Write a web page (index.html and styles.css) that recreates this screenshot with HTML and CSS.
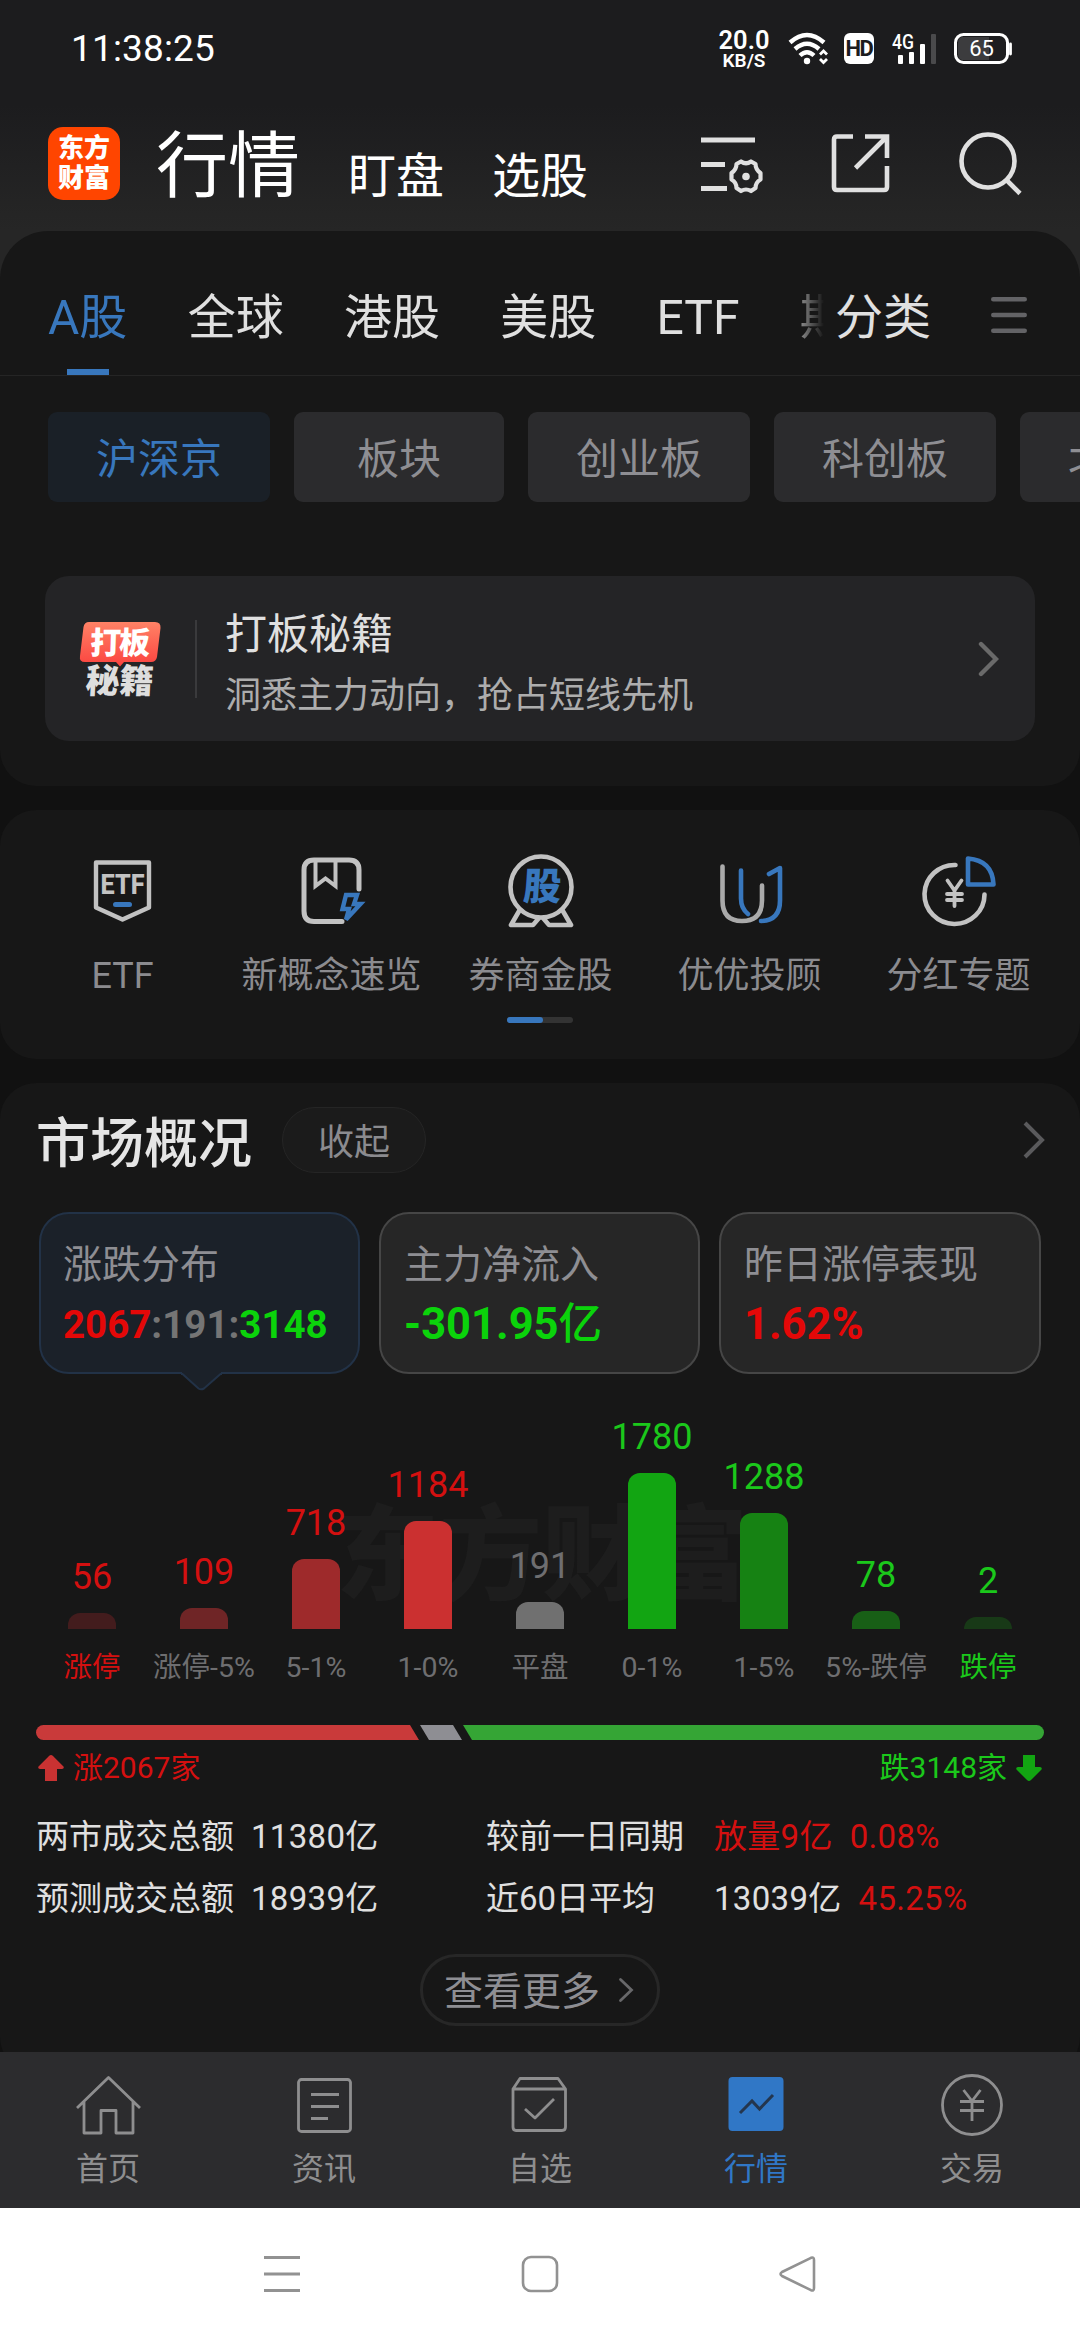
FILE: index.html
```html
<!DOCTYPE html>
<html lang="zh-CN">
<head>
<meta charset="utf-8">
<title>行情</title>
<link rel="stylesheet" href="styles.css">
</head>
<body>
<div class="screen">
  <header class="top">
    <div class="status">
      <span class="clock">11:38:25</span>
      <div class="status-icons">
        <div class="speed"><b>20.0</b><i>KB/S</i></div>
        <svg class="wifi" width="42" height="34" viewBox="0 0 42 34" fill="none" stroke="#fff" stroke-width="4.4">
          <path d="M2 10.5Q19 -4.500 36 10.500"/><path d="M7 17Q19 6.500 31 17"/><path d="M12 23.500Q19 17 26 23.500" />
          <circle cx="19" cy="29" r="3.200" fill="#fff" stroke="none"/>
          <path d="M32 22.500L35.500 19L39 22.500M32 27L35.500 30.500L39 27" stroke-width="2.800"/>
        </svg>
        <span class="hd">HD</span>
        <svg class="signal" width="46" height="34" viewBox="0 0 46 34">
          <text x="0" y="15.500" class="g4" textLength="22" lengthAdjust="spacingAndGlyphs">4G</text>
          <rect x="6" y="22" width="5" height="9" rx="1" fill="#fff"/><rect x="17" y="19" width="5" height="12" rx="1" fill="#fff"/>
          <rect x="28" y="11" width="5" height="20" rx="1" fill="#fff"/><rect x="39" y="1" width="5" height="30" rx="1" fill="#4a4a4c"/>
        </svg>
        <svg class="battery" width="60" height="32" viewBox="0 0 60 32">
          <rect x="1.500" y="1.500" width="52" height="28" rx="8" fill="#1d1d1f" stroke="#fff" stroke-width="3"/>
          <path d="M8 4H35V27H8Q4 26 4 21V10Q4 5 8 4Z" fill="#3c3c3e"/>
          <path d="M56.500 11V21" stroke="#fff" stroke-width="2.800" stroke-linecap="round"/>
          <text x="27.500" y="23" text-anchor="middle" class="pct">65</text>
        </svg>
      </div>
    </div>
    <div class="titlebar">
      <div class="logo"><span>东方</span><span>财富</span></div>
      <h1>行情</h1>
      <span class="sub">盯盘</span>
      <span class="sub">选股</span>
      <div class="actions">
        <svg width="64" height="62" viewBox="0 0 64 62" fill="none" stroke="#e0e0e0" stroke-width="5">
          <path d="M0 8H54M0 32.500H24M0 56.500H26"/>
          <path stroke-width="4.200" stroke-linejoin="round" d="M40 29.500Q45 33 50 29.500L54.500 32Q54.500 37.500 59.500 41L59.500 47.500Q54.500 50.500 54.500 56L50 59Q45 56 40 59L35.500 56Q35.500 50.500 30.500 47.500L30.500 41Q35.500 37.500 35.500 32Z"/>
          <circle cx="45" cy="44.500" r="3.800" fill="#e0e0e0" stroke="none"/>
        </svg>
        <svg width="60" height="62" viewBox="0 0 60 62" fill="none" stroke="#e0e0e0" stroke-width="4.600">
          <path d="M22 4.500H6Q3 4.500 3 7.500V55Q3 58 6 58H53Q56 58 56 55V34M34 4.500H56V26M56 4.500L24.500 36"/>
        </svg>
        <svg width="64" height="66" viewBox="0 0 64 66" fill="none" stroke="#e0e0e0" stroke-width="4.600">
          <circle cx="29" cy="31" r="26.500"/><path d="M47.500 50L61 63.500"/>
        </svg>
      </div>
    </div>
  </header>

  <main class="content">
    <section class="panel market">
      <nav class="tabs">
        <div class="tablist"><span class="on">A股</span><span>全球</span><span>港股</span><span>美股</span><span>ETF</span><span class="fade">期</span></div>
        <span class="classify">分类</span>
        <svg width="36" height="38" viewBox="0 0 36 38" stroke="#636366" stroke-width="4.600" stroke-linecap="round"><path d="M2.300 3.300H33.700M2.300 19H33.700M2.300 34.700H33.700"/></svg>
      </nav>
      <div class="chips">
        <span class="chip on">沪深京</span><span class="chip">板块</span><span class="chip">创业板</span><span class="chip">科创板</span><span class="chip">北交所</span>
      </div>
      <a class="banner">
        <svg class="badge" width="84" height="80" viewBox="0 0 84 80">
          <defs><linearGradient id="coral" x1="0" y1="0" x2="0" y2="1"><stop offset="0" stop-color="#ff8266"/><stop offset="1" stop-color="#fb433f"/></linearGradient></defs>
          <path d="M10 3H76Q82 3 81.500 9L78 38Q77 43 72 43H45L41 47.500L37 43H6Q0 43 1 37L4.500 8Q5.500 3 10 3Z" fill="url(#coral)"/>
          <text x="10" y="35" class="badge-top" textLength="60" transform="skewX(-2) translate(2 0)">打板</text>
          <text x="8" y="74" class="badge-bottom" textLength="68" transform="skewX(-3) translate(2 0)">秘籍</text>
        </svg>
        <div class="banner-text"><strong>打板秘籍</strong><p>洞悉主力动向，抢占短线先机</p></div>
        <svg width="22" height="38" viewBox="0 0 22 38" fill="none" stroke="#6a6a6a" stroke-width="4.400" stroke-linecap="round"><path d="M4 4L19 19L4 34"/></svg>
      </a>
    </section>

    <section class="panel tools">
      <div class="tool-row">
        <div class="tool">
          <svg width="80" height="84" viewBox="0 0 80 84" fill="none" stroke="#c2c2c2" stroke-width="4.400" stroke-linejoin="round">
            <path d="M13 12.500H66V57.500L39.500 69.500L13 57.500Z"/>
            <text x="39.500" y="43.500" text-anchor="middle" class="etf" textLength="44" lengthAdjust="spacingAndGlyphs">ETF</text>
            <path d="M32.500 54.500H46.500" stroke="#3877bd" stroke-width="5" stroke-linecap="round"/>
          </svg><span>ETF</span></div>
        <div class="tool">
          <svg width="80" height="84" viewBox="0 0 80 84" fill="none" stroke="#c2c2c2" stroke-width="5" stroke-linecap="round">
            <path d="M50 71.500H22Q12 71.500 12 61V20Q12 10 22 10H57Q67 10 67 20V39"/>
            <path d="M23.500 11V36L33.500 28.500L43.500 36V11" stroke-width="4"/>
            <path d="M54 45H65L62 54H68.500L54 69.500L57 59H50.500Z" stroke="#3877bd" stroke-width="4.400"/>
          </svg><span>新概念速览</span></div>
        <div class="tool">
          <svg width="80" height="84" viewBox="0 0 80 84" fill="none" stroke="#c2c2c2" stroke-width="4.600" stroke-linejoin="round">
            <circle cx="40" cy="37" r="30.500"/>
            <path d="M19 59.500L10 75H32L38 68M61 59.500L70 75H48L42 68"/>
            <text x="41" y="50" text-anchor="middle" class="gu" transform="skewX(-4) translate(3 0)">股</text>
          </svg><span>券商金股</span></div>
        <div class="tool">
          <svg width="80" height="84" viewBox="0 0 80 84" fill="none" stroke="#aaa" stroke-width="4.600" stroke-linecap="round" stroke-linejoin="round">
            <path d="M12.500 16.500V50.500Q12.500 71 32 71Q52 71 52 50.500V35.500"/>
            <path d="M31 20.500V48.500Q31 58.500 38 64M51 71Q70 70.500 70 50.500V18L59 24" stroke="#3877bd"/>
          </svg><span>优优投顾</span></div>
        <div class="tool">
          <svg width="80" height="84" viewBox="0 0 80 84" fill="none" stroke="#c2c2c2" stroke-width="4.600" stroke-linecap="round">
            <path d="M36.500 15A30 29.500 0 1 0 65.500 44.500"/>
            <path d="M28.500 30.500L35.500 40.500L42.500 30.500M35.500 40.500V56M28 44H43M28 50H43" stroke-width="3.800"/>
            <path d="M49 8.500V34.500H74.500Q73.500 10.500 49 8.500Z" stroke="#3877bd" stroke-linejoin="round"/>
          </svg><span>分红专题</span></div>
      </div>
      <div class="pager"><i></i></div>
    </section>

    <section class="panel overview">
      <div class="head"><h2>市场概况</h2><span class="pill">收起</span>
        <svg width="24" height="40" viewBox="0 0 24 40" fill="none" stroke="#5a5a5c" stroke-width="4"><path d="M3 3L20 20L3 37"/></svg>
      </div>
      <div class="cards">
        <div class="card on"><span>涨跌分布</span><b class="ratio"><em class="up">2067</em>:191:<em class="down">3148</em></b>
          <svg class="pointer" width="42" height="19" viewBox="0 0 42 19"><path d="M1 0V2L17.500 16.500Q20 18 23 16.500L40 2V0Z" fill="#1b2129"/><path d="M0 2H1.500L17.500 16.500Q20 18 23 16.500L39.500 2H41" fill="none" stroke="#223247" stroke-width="2"/></svg>
        </div>
        <div class="card"><span>主力净流入</span><b class="down">-301.95<small>亿</small></b></div>
        <div class="card"><span>昨日涨停表现</span><b class="up">1.62%</b></div>
      </div>
      <div class="chart">
        <span class="watermark">东方财富</span>
        <div class="col up"><b>56</b><i class="r1" style="height:16px"></i><span>涨停</span></div>
        <div class="col up"><b>109</b><i class="r2" style="height:21px"></i><span class="dim">涨停-5%</span></div>
        <div class="col up"><b>718</b><i class="r3" style="height:70px"></i><span class="dim">5-1%</span></div>
        <div class="col up"><b>1184</b><i class="r4" style="height:108px"></i><span class="dim">1-0%</span></div>
        <div class="col dim"><b>191</b><i class="flat" style="height:27px"></i><span>平盘</span></div>
        <div class="col down"><b>1780</b><i class="g4bar" style="height:156px"></i><span class="dim">0-1%</span></div>
        <div class="col down"><b>1288</b><i class="g3bar" style="height:116px"></i><span class="dim">1-5%</span></div>
        <div class="col down"><b>78</b><i class="g2bar" style="height:18px"></i><span class="dim">5%-跌停</span></div>
        <div class="col down"><b>2</b><i class="g1bar" style="height:12px"></i><span>跌停</span></div>
      </div>
      <svg class="split" width="1008" height="15" viewBox="0 0 1008 15">
        <path d="M7.500 0H374L383 15H7.500A7.500 7.500 0 0 1 7.500 0Z" fill="#c93a3a"/>
        <path d="M384 0H417L426 15H393Z" fill="#8e8e93"/>
        <path d="M427 0H1000.500A7.500 7.500 0 0 1 1000.500 15H436Z" fill="#35a535"/>
      </svg>
      <div class="counts">
        <span class="up"><svg width="28" height="28" viewBox="0 0 28 28"><path d="M14 1Q15 1 16 2L26.500 12.500Q27.500 14.500 25 15H20V27H8V15H3Q.500 14.500 1.500 12.500L12 2Q13 1 14 1Z" fill="#c93232"/></svg>涨2067家</span>
        <span class="down">跌3148家<svg width="28" height="28" viewBox="0 0 28 28"><path d="M14 27Q15 27 16 26L26.500 15.500Q27.500 13.500 25 13H20V1H8V13H3Q.500 13.500 1.500 15.500L12 26Q13 27 14 27Z" fill="#12a512"/></svg></span>
      </div>
      <div class="stats">
        <span>两市成交总额</span><span class="num">11380亿</span><span>较前一日同期</span><span class="pair num up"><i>放量9亿</i><i>0.08%</i></span>
        <span>预测成交总额</span><span class="num">18939亿</span><span>近60日平均</span><span class="pair num"><i>13039亿</i><i class="up">45.25%</i></span>
      </div>
      <div class="more"><span>查看更多</span><svg width="16" height="26" viewBox="0 0 16 26" fill="none" stroke="#68686a" stroke-width="2.800" stroke-linecap="round"><path d="M2.500 2.500L13.500 13L2.500 23.500"/></svg></div>
    </section>
  </main>

  <nav class="tabbar">
    <div><svg width="66" height="64" viewBox="0 0 66 64" fill="none" stroke="#8e8e8f" stroke-width="2.800" stroke-linejoin="round"><path d="M2 35L33.500 4.500L65 35M9 28V60H26V37.500H41V60H58V28"/></svg><span>首页</span></div>
    <div><svg width="66" height="64" viewBox="0 0 66 64" fill="none" stroke="#8e8e8f" stroke-width="2.800"><rect x="7.500" y="6.500" width="52" height="52" rx="3"/><path d="M20 21.500H48M20 33.500H48M20 45.500H37"/></svg><span>资讯</span></div>
    <div><svg width="66" height="64" viewBox="0 0 66 64" fill="none" stroke="#8e8e8f" stroke-width="2.800" stroke-linejoin="round"><path d="M6 16L13 5.500H51L58.500 16V54Q58.500 57.500 55 57.500H9Q6 57.500 6 54ZM6 16H58.500M18 36L28 45L47 26"/></svg><span>自选</span></div>
    <div class="on"><svg width="66" height="64" viewBox="0 0 66 64"><rect x="5.500" y="4" width="55" height="54" rx="4" fill="#3077c6"/><path d="M17 40L29 28L36.500 36L50 22" fill="none" stroke="#24364e" stroke-width="3"/></svg><span>行情</span></div>
    <div><svg width="66" height="64" viewBox="0 0 66 64" fill="none" stroke="#8e8e8f" stroke-width="2.800"><circle cx="33" cy="32" r="29.500"/><path d="M24.500 17L33 28L41.500 17M33 28V48M21 28.500H45M21 37.500H45"/></svg><span>交易</span></div>
  </nav>
  <div class="sysnav">
    <svg width="38" height="38" viewBox="0 0 38 38" stroke="#929292" stroke-width="2.800"><path d="M1 2.500H37M1 19H37M1 35.500H37"/></svg>
    <svg width="38" height="38" viewBox="0 0 38 38" fill="none" stroke="#929292" stroke-width="2.600"><rect x="2" y="2" width="34" height="34" rx="8"/></svg>
    <svg width="38" height="38" viewBox="0 0 38 38" fill="none" stroke="#929292" stroke-width="2.600" stroke-linejoin="round"><path d="M3 17L32 2.800Q35 1.500 35 5V33Q35 36.500 32 35.200L3 21Q0 19 3 17Z"/></svg>
  </div>
</div>
</body>
</html>
```
FILE: styles.css
```css
* { box-sizing: border-box; }
body { margin: 0; background: #111; font-family: Roboto, "Noto Sans CJK SC", sans-serif; color: #e0e0e0; -webkit-font-smoothing: antialiased; }
h1, h2, p { margin: 0; font-weight: 400; }
i, em { font-style: normal; }
svg { display: block; flex: none; }
span, strong, b, p, h1, h2 { white-space: nowrap; }
.screen { width: 1080px; height: 2340px; display: flex; flex-direction: column; overflow: hidden; }

.top { height: 231px; flex: none; background: linear-gradient(#1c1c1e 0, #1c1c1e 105px, #252525 215px, #262626 231px); box-shadow: 0 60px 0 #262626; }
.status { height: 96px; padding: 0 66px 0 71px; display: flex; justify-content: space-between; align-items: center; color: #fff; }
.clock { font-size: 37px; line-height: 44px; letter-spacing: .15px; padding-top: 1px; }
.status-icons { display: flex; align-items: center; height: 44px; margin-top: 1px; }
.speed { width: 54px; display: flex; flex-direction: column; align-items: center; margin-right: 17px; margin-top: -1px; }
.speed b { font-size: 25.500px; line-height: 24px; font-weight: 600; }
.speed i { font-size: 19px; line-height: 17px; font-weight: 600; }
.wifi { margin-right: 14px; }
.hd { width: 30px; height: 31px; border-radius: 6px; background: #fff; color: #1c1c1e; font-size: 22px; font-weight: 700; line-height: 32px; text-align: center; letter-spacing: -1.500px; margin-right: 18px; }
.signal { margin-right: 16px; margin-top: 2px; }
.g4 { font-size: 21px; font-weight: 500; fill: #fff; }
.pct { font-size: 22px; fill: #fff; }
.titlebar { height: 135px; padding: 0 57px 0 48px; display: flex; align-items: center; color: #fff; }
.logo { width: 72px; height: 73px; margin-bottom: 1px; border-radius: 15px; background: #ff4500; display: flex; flex-direction: column; align-items: center; justify-content: center; font-size: 26px; line-height: 30px; font-weight: 900; }
h1 { font-size: 72px; line-height: 72px; margin-left: 36px; margin-top: 6px; }
.sub { font-size: 48px; line-height: 48px; margin-left: 48px; margin-top: 27px; }
.actions { margin-left: auto; display: flex; align-items: center; gap: 66px; margin-bottom: 2px; }
.actions svg:nth-child(2) { margin: 0 2px 0 0; }

.content { flex: 1; min-height: 0; overflow: hidden; display: flex; flex-direction: column; gap: 24px; position: relative; }
.panel { background: #171717; border-radius: 36px; flex: none; }
.market { height: 555px; border-radius: 48px 48px 36px 36px; }
.tabs { height: 145px; border-bottom: 1px solid #252525; display: flex; align-items: center; padding: 0 54px 0 48px; font-size: 48px; line-height: 60px; }
.tablist { flex: none; width: 786px; display: flex; gap: 60.300px; overflow: hidden; height: 144px; align-items: center; mask-image: linear-gradient(90deg, #000 735px, transparent 776px); }
.tablist span { height: 144px; line-height: 173px; }
.tablist .on { color: #3877bd; background: linear-gradient(#3877bd, #3877bd) center 138px / 42px 6px no-repeat; }
.classify { margin-top: 29px; margin-left: 1px; }
.tabs > svg { margin: 24px 0 0 60px; }
.chips { display: flex; gap: 24px; padding: 36px 0 0 48px; overflow: hidden; }
.chip { flex: none; height: 90px; padding: 0 48px; border-radius: 9px; background: #2b2b2d; color: #8e8e93; font-size: 42px; line-height: 95px; }
.chip:nth-child(2) { padding: 0 63px; }
.chip.on { background: #1a2027; color: #3877bd; }
.banner { margin: 74px 45px 0; height: 165px; border-radius: 24px; background: #242426; display: flex; align-items: center; padding: 0 36px 0 34px; }
.badge-top { font-size: 31px; font-weight: 900; fill: #fff; }
.badge-bottom { font-size: 34px; font-weight: 900; fill: #dedede; }
.banner-text { flex: 1; margin-left: 32px; border-left: 2px solid #3a3a3c; height: 78px; padding-left: 28px; display: flex; flex-direction: column; justify-content: center; }
.banner-text strong { font-size: 42px; font-weight: 400; line-height: 60px; margin-top: 14px; }
.banner-text p { font-size: 36px; line-height: 62px; color: #adadad; }

.tools { height: 249px; }
.tool-row { display: flex; padding: 40px 18px 0; }
.tool { width: 209px; flex: none; display: flex; flex-direction: column; align-items: center; font-size: 36px; line-height: 50px; color: #8b8b8f; }
.tool span { margin-top: 17px; }
.etf { font-size: 28px; font-weight: 800; fill: #c2c2c2; stroke: none; }
.gu { font-size: 38px; font-weight: 900; fill: #3877bd; stroke: none; }
.pager { width: 66px; height: 6px; margin: 16px auto 0; border-radius: 3px; background: #333; }
.pager i { display: block; width: 36px; height: 6px; border-radius: 3px; background: #3877bd; }

.overview { height: 990px; padding-top: 24px; }
.head { height: 66px; padding: 0 34px 0 36px; display: flex; align-items: center; }
h2 { font-size: 54px; font-weight: 500; line-height: 66px; padding-top: 9px; color: #e5e5e5; }
.pill { width: 144px; height: 66px; margin-left: 30px; border: 1px solid #252525; border-radius: 33px; background: #1b1b1b; color: #8b8b8f; font-size: 36px; line-height: 70px; text-align: center; }
.head svg { margin-left: auto; }
.cards { display: grid; grid-template-columns: 321px 321px 322px; gap: 19px; padding: 39px 39px 0; }
.card { position: relative; height: 162px; border: 2px solid #464646; border-radius: 30px; background: #262626; padding: 25px 0 0 23px; display: flex; flex-direction: column; }
.card > span { font-size: 39px; line-height: 52px; color: #8e8e93; }
.card > b { font-size: 43.500px; line-height: 50px; margin-top: 9px; font-weight: 700; }
.card small { font-size: 43.500px; font-weight: 500; }
.card.on { background: #1b2129; border-color: #223247; padding-left: 22px; }
.card .ratio { font-size: 38.500px; color: #757575; }
.pointer { position: absolute; left: 140px; top: 158px; }
.up { color: #d41010; }
.down { color: #1bc81b; }
.card .up { color: #e40808; }
.card .down { color: #0bd30b; }
.chart { position: relative; height: 327px; padding: 0 36px; display: grid; grid-template-columns: repeat(9, 112px); isolation: isolate; }
.watermark { position: absolute; z-index: -1; left: 336px; top: 128px; font-size: 103px; line-height: 110px; font-weight: 900; color: #1d1d1d; }
.col { display: flex; flex-direction: column; align-items: center; justify-content: flex-end; }
.col b { font-size: 36px; line-height: 42px; font-weight: 400; margin-bottom: 15px; }
.col i { width: 48px; border-radius: 12px 12px 0 0; flex: none; }
.col span { font-size: 28.500px; line-height: 36px; margin-top: 21px; margin-bottom: 15px; }
.dim, .col .dim { color: #6e6e70; }
.r1 { background: #431c1d; } .r2 { background: #6f2526; } .r3 { background: #9e2a2b; } .r4 { background: #cb3030; }
.flat { background: #707070; }
.g4bar { background: #12a512; } .g3bar { background: #168213; } .g2bar { background: #185f16; } .g1bar { background: #183917; }
.split { margin: 24px 36px 0; }
.counts { display: flex; justify-content: space-between; height: 56px; padding: 0 37px; align-items: center; font-size: 30px; line-height: 40px; }
.counts span { display: flex; align-items: center; gap: 8px; }
.stats { display: grid; grid-template-columns: 215px 235px 228px 330px; grid-auto-rows: 62px; align-items: center; padding: 10px 36px 0; font-size: 33px; line-height: 44px; }
.num { letter-spacing: .3px; }
.pair { display: flex; gap: 17px; }
.more { width: 240px; height: 72px; margin: 24px auto 0; border: 3px solid #272727; border-radius: 36px; display: flex; align-items: center; justify-content: center; gap: 18px; font-size: 39px; line-height: 66px; color: #8e8e93; }
.more span { padding-top: 4px; margin-left: -2px; }

.tabbar { height: 156px; flex: none; background: #2c2c2e; display: grid; grid-template-columns: repeat(5, 216px); color: #8e8e8f; font-size: 32px; line-height: 40px; }
.tabbar div { display: flex; flex-direction: column; align-items: center; padding-top: 21px; }
.tabbar span { margin-top: 12px; }
.tabbar .on { color: #3077c6; }
.sysnav { height: 132px; flex: none; background: #fff; display: flex; justify-content: center; align-items: center; gap: 220px; }
```
